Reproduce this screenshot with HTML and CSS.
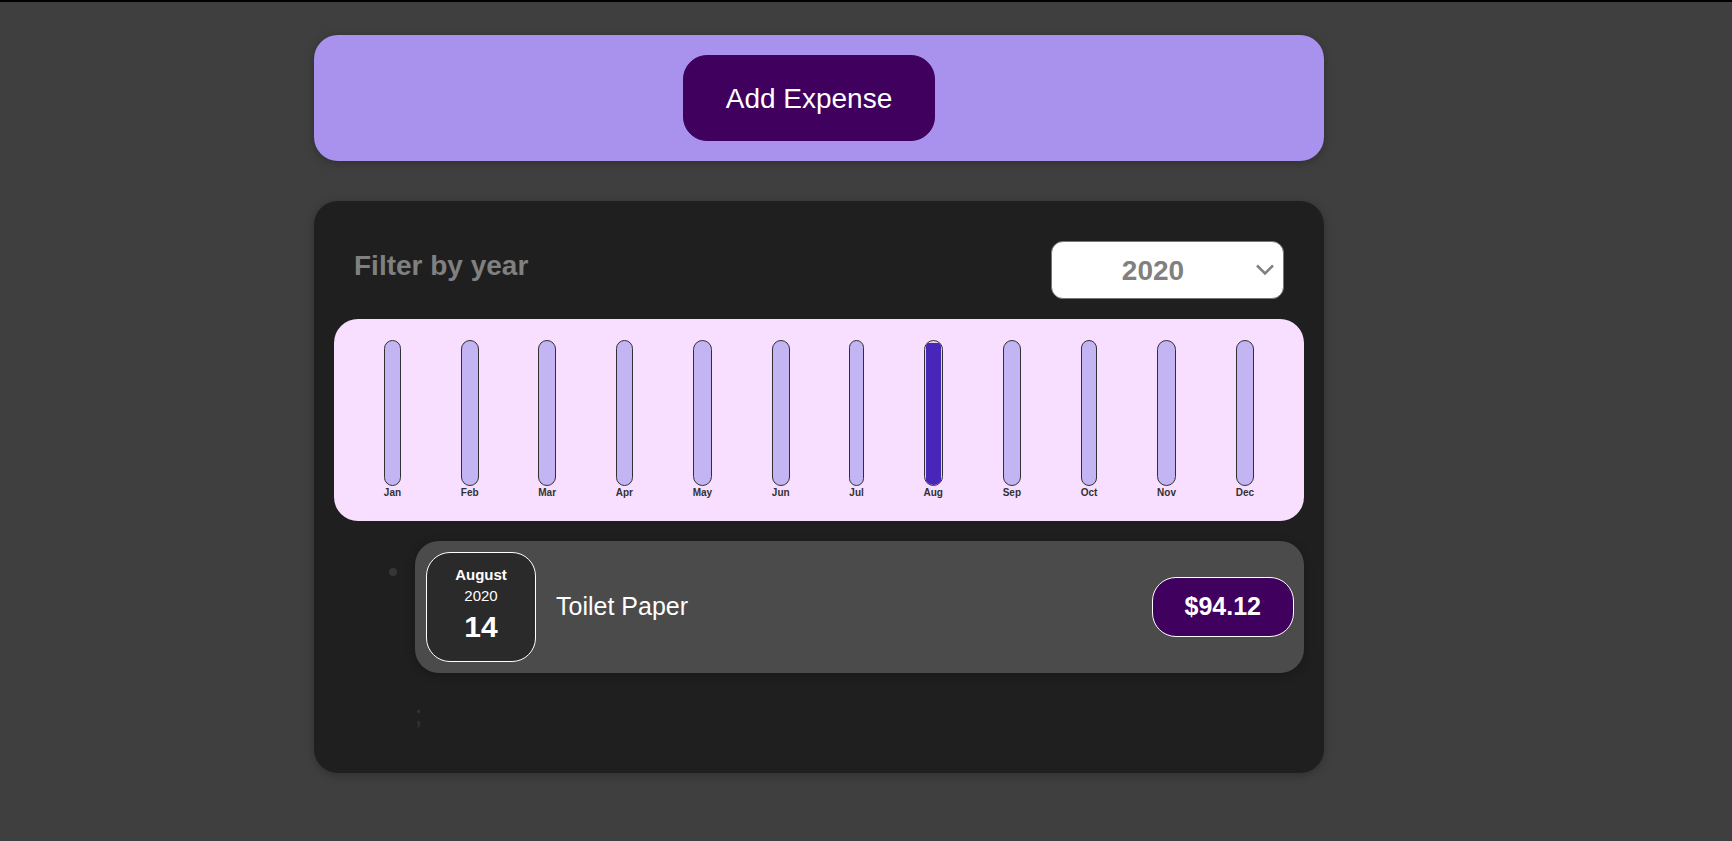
FILE: index.html
```
<!DOCTYPE html>
<html lang="en">
<head>
<meta charset="utf-8">
<title>Expenses</title>
<link rel="stylesheet" href="styles.css">
</head>
<body>
<main class="page">
  <section class="new-expense">
    <button type="button" class="new-expense-button">Add Expense</button>
  </section>
  <section class="expenses">
    <div class="filter">
      <label class="filter-label" for="year">Filter by year</label>
      <div class="filter-control">
        <select class="filter-select" id="year">
          <option>2022</option>
          <option>2021</option>
          <option selected>2020</option>
          <option>2019</option>
        </select>
        <svg class="filter-arrow" viewBox="0 0 18 12" aria-hidden="true"><path d="M1 1.5 9 9.5 17 1.5"/></svg>
      </div>
    </div>
    <div class="chart">
      <div class="month"><div class="bar"></div><span class="month-label">Jan</span></div>
      <div class="month"><div class="bar"></div><span class="month-label">Feb</span></div>
      <div class="month"><div class="bar"></div><span class="month-label">Mar</span></div>
      <div class="month"><div class="bar"></div><span class="month-label">Apr</span></div>
      <div class="month"><div class="bar"></div><span class="month-label">May</span></div>
      <div class="month"><div class="bar"></div><span class="month-label">Jun</span></div>
      <div class="month"><div class="bar"></div><span class="month-label">Jul</span></div>
      <div class="month"><div class="bar bar-filled"><div class="bar-fill" style="height: 100%"></div></div><span class="month-label">Aug</span></div>
      <div class="month"><div class="bar"></div><span class="month-label">Sep</span></div>
      <div class="month"><div class="bar"></div><span class="month-label">Oct</span></div>
      <div class="month"><div class="bar"></div><span class="month-label">Nov</span></div>
      <div class="month"><div class="bar"></div><span class="month-label">Dec</span></div>
    </div>
    <ul class="list">
      <li class="list-row">
        <article class="item">
          <time class="date" datetime="2020-08-14">
            <span class="date-month">August</span>
            <span class="date-year">2020</span>
            <span class="date-day">14</span>
          </time>
          <h2 class="item-title">Toilet Paper</h2>
          <div class="price">$94.12</div>
        </article>
      </li>
    </ul>
    <p class="list-end">;</p>
  </section>
</main>
</body>
</html>
```
FILE: styles.css
```
* { box-sizing: border-box; }

html { background: #3f3f3f; }

body {
  margin: 0;
  border-top: 2px solid #000;
  font-family: "Liberation Sans", Arial, sans-serif;
}

.page {
  display: flex;
  flex-direction: column;
  align-items: center;
  gap: 40px;
  padding: 33px 94px 40px 0;
}

.new-expense,
.expenses {
  width: 95%;
  max-width: 1010px;
  padding: 20px;
  border-radius: 24px;
  box-shadow: 0 2px 10px rgba(0, 0, 0, 0.25);
}

.new-expense {
  display: flex;
  justify-content: center;
  background: #a892ee;
}

.new-expense-button {
  margin-right: 20px;
  padding: 27px 42px 25px;
  border: 1px solid #40005d;
  border-radius: 24px;
  background: #40005d;
  color: #fff;
  font: 28px/32px "Liberation Sans", Arial, sans-serif;
}

.expenses {
  padding-bottom: 42px;
  background: #1f1f1f;
}

.filter {
  display: flex;
  justify-content: space-between;
  margin: 20px;
}

.filter-label {
  padding-top: 9px;
  color: gray;
  font-size: 28px;
  font-weight: bold;
  line-height: 32px;
}

.filter-control { position: relative; }

.filter-select {
  appearance: none;
  display: block;
  width: 233px;
  height: 58px;
  padding: 2px 29px 0 0;
  border: 1px solid #767676;
  border-radius: 12px;
  background: #fff;
  color: gray;
  font: bold 28px/32px "Liberation Sans", Arial, sans-serif;
  text-align: center;
  text-align-last: center;
}

.filter-arrow {
  position: absolute;
  top: 23px;
  right: 10px;
  width: 18px;
  height: 12px;
  fill: none;
  stroke: gray;
  stroke-width: 2.5;
  pointer-events: none;
}

.chart {
  display: flex;
  justify-content: space-around;
  padding: 21px 20px;
  border-radius: 24px;
  background: #f8dfff;
}

.month {
  display: flex;
  flex-direction: column;
}

.bar {
  display: flex;
  flex-direction: column;
  justify-content: flex-end;
  height: 146px;
  border: 1px solid #313131;
  border-radius: 12px;
  background: #c3b4f3;
  overflow: hidden;
}

.bar-filled {
  padding: 2px 1px 0;
  background: #e4cdf5;
}

.bar-fill { background: #4826b9; }

.month-label {
  color: #313131;
  font-size: 10px;
  font-weight: bold;
  line-height: 14px;
}

.list {
  margin: 20px 0 0;
  padding-left: 81px;
}

.list-row {
  color: #404040;
  list-style: none;
  position: relative;
}

.list-row::before {
  content: "";
  position: absolute;
  top: 27px;
  left: -26px;
  width: 8px;
  height: 8px;
  border-radius: 50%;
  background: #363636;
}

.item {
  display: flex;
  align-items: center;
  gap: 20px;
  padding: 11px 10px 11px 11px;
  border-radius: 24px;
  background: #4b4b4b;
  color: #fff;
  box-shadow: 0 2px 10px rgba(0, 0, 0, 0.25);
}

.date {
  display: flex;
  flex-direction: column;
  align-items: center;
  justify-content: center;
  width: 110px;
  height: 110px;
  padding-bottom: 2px;
  border: 1px solid #fff;
  border-radius: 24px;
  background: #2a2a2a;
}

.date-month,
.date-year {
  font-size: 15px;
  line-height: 21px;
}

.date-month,
.date-day { font-weight: bold; }

.date-day {
  font-size: 30px;
  line-height: 42px;
}

.item-title {
  flex: 1;
  margin: 0;
  padding-bottom: 2px;
  font-size: 25px;
  font-weight: normal;
  line-height: 32px;
}

.price {
  padding: 13px 32px 15px;
  border: 1px solid #fff;
  border-radius: 24px;
  background: #40005d;
  font-size: 25px;
  font-weight: bold;
  line-height: 30px;
}

.list-end {
  margin: 26px 0 0 81px;
  color: #363636;
  font-size: 25px;
  line-height: 32px;
}
```
